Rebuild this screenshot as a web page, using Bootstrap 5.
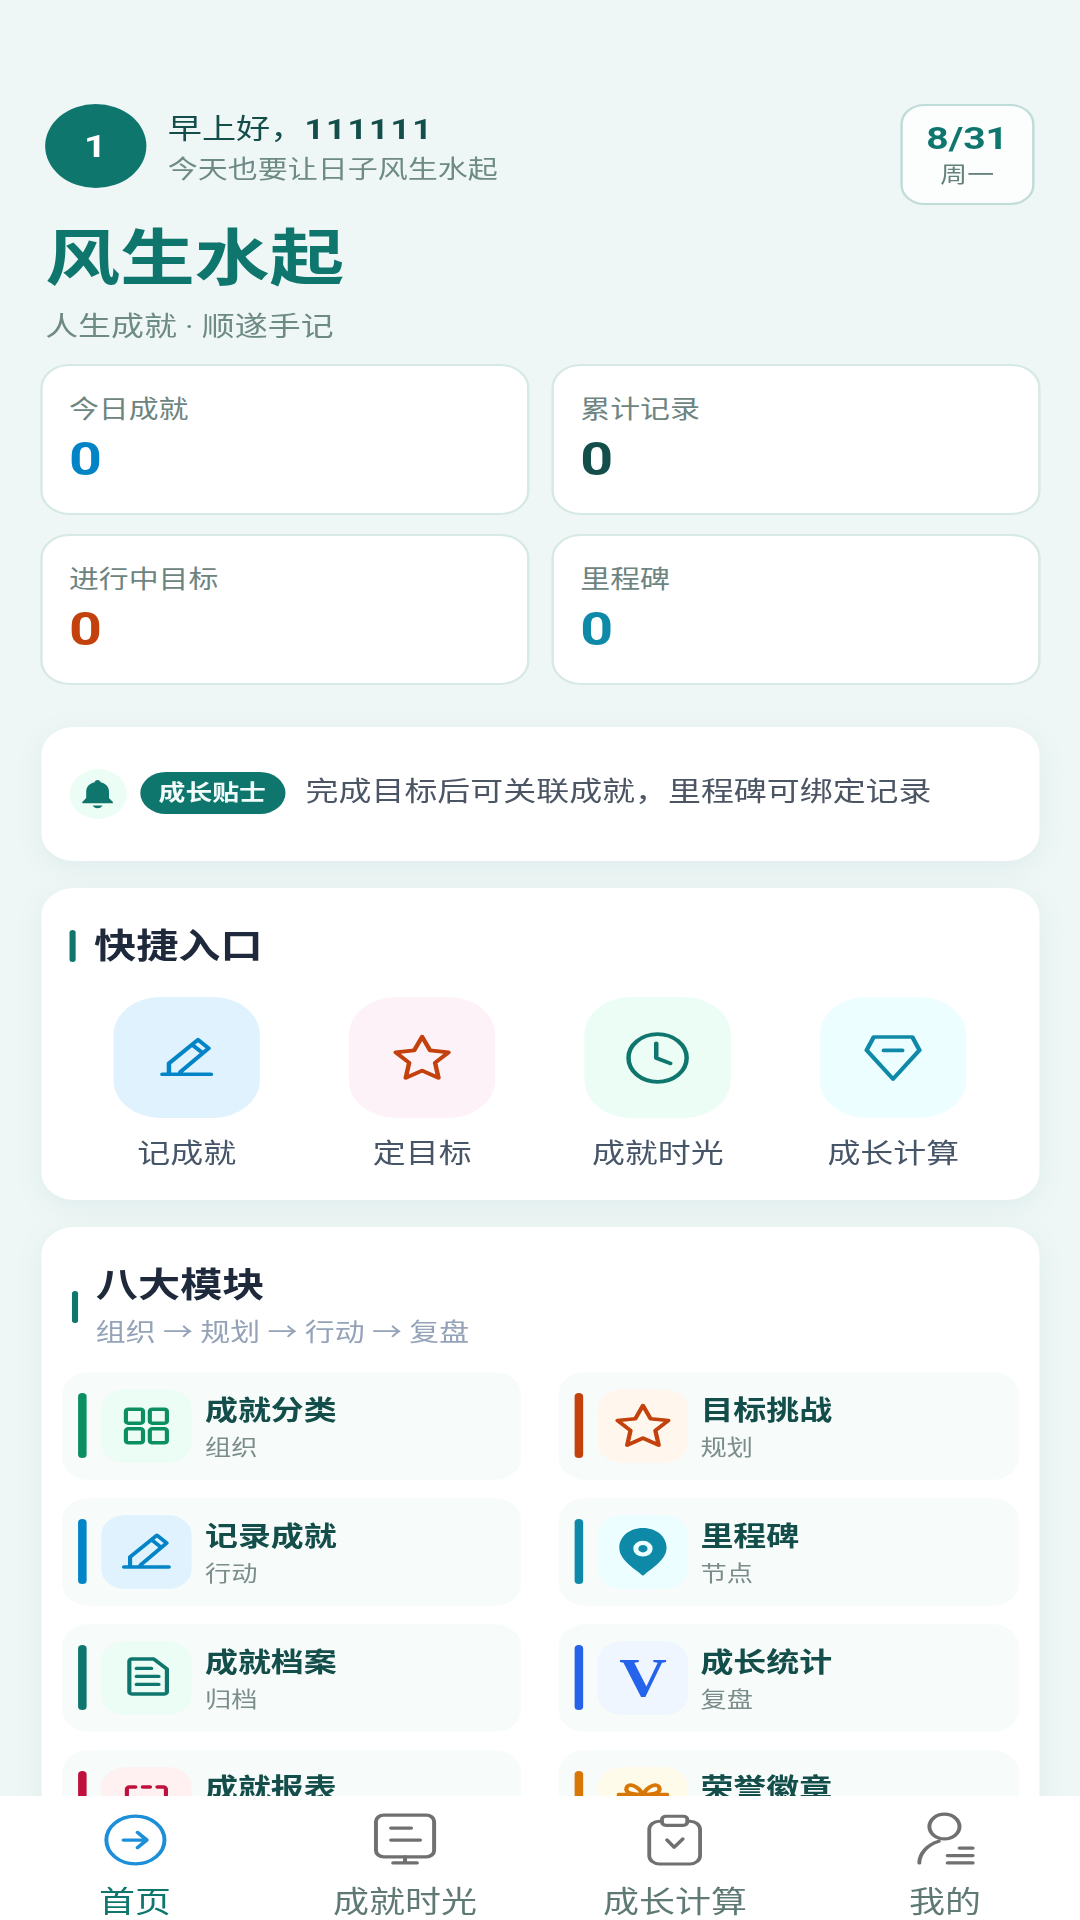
<!DOCTYPE html>
<html lang="zh-CN">
  <head>
    <meta charset="UTF-8" />
    <meta name="viewport" content="width=device-width, initial-scale=1.0" />
    <title>风生水起</title>
    <link
      href="https://cdn.jsdelivr.net/npm/bootstrap@5.3.0/dist/css/bootstrap.min.css"
      rel="stylesheet"
    />
    <style>
      html,
      body {
        margin: 0;
        height: 1920px;
        overflow: hidden;
        background: #eff7f6;
      }
      body {
        font-family: Roboto, "Noto Sans CJK SC", sans-serif;
      }
      /* the screenshot is stretched wider than tall, so the page is too */
      .phone {
        width: 885.25px;
        height: 1920px;
        transform: scaleX(1.22);
        transform-origin: 0 0;
      }
      .scroller {
        flex: 1 1 auto;
        min-height: 0;
        overflow: hidden;
        padding: 104px 33.5px 0;
      }
      .avatar {
        width: 83px;
        height: 84px;
        margin-left: 3px;
        background: #0f766e;
        color: #fff;
        font-size: 32px;
        font-weight: 700;
      }
      .greet {
        margin-left: 18px;
      }
      .hello {
        font-size: 28px;
        line-height: 36px;
        color: #134e4a;
        margin-top: 8px;
      }
      .hello b {
        font-weight: 700;
        letter-spacing: 1.6px;
      }
      .hello-sub {
        font-size: 24.6px;
        line-height: 34px;
        color: #6d8a85;
        margin-top: 5px;
      }
      .date-box {
        width: 110px;
        height: 101px;
        background: #fcfefe;
        border: 2.5px solid #c0dcd7;
        border-radius: 20px;
        margin-right: 4px;
      }
      .date-num {
        font-size: 32px;
        line-height: 36px;
        font-weight: 700;
        color: #0f766e;
      }
      .date-day {
        font-size: 22px;
        line-height: 30px;
        color: #64807a;
        margin-top: 4px;
      }
      .app-title {
        font-size: 61.3px;
        line-height: 68px;
        font-weight: 700;
        color: #0f766e;
        margin: 20px 0 0 3.5px;
      }
      .app-sub {
        font-size: 27px;
        line-height: 36px;
        color: #6d8a85;
        margin: 16px 0 0 3.5px;
      }
      .stat-grid {
        --bs-gutter-x: 18px;
        --bs-gutter-y: 19px;
        margin: 0 -10px;
      }
      .stat-card {
        height: 151px;
        border: 2.5px solid #d6e9e5;
        border-radius: 24px;
      }
      .stat-card .card-body {
        padding: 27px 22px 0;
      }
      .stat-label {
        font-size: 24.5px;
        line-height: 34px;
        color: #6d8480;
      }
      .stat-value {
        font-size: 47px;
        line-height: 54px;
        font-weight: 700;
        margin-top: 5px;
      }
      .panel {
        border: 0;
        border-radius: 27px;
        box-shadow: 0 6px 26px rgba(15, 118, 110, 0.08);
      }
      .tip-panel {
        height: 134px;
        margin-top: 42px;
        padding-left: 23px;
      }
      .tip-bell {
        width: 47px;
        height: 50px;
        background: #ecfdf5;
        margin-right: 11px;
      }
      .tip-pill {
        height: 42px;
        width: 119px;
        background: #0f766e;
        color: #f2fbf9;
        font-size: 22px;
        font-weight: 700;
        border-radius: 21px;
        margin: 0 17px 3px 0;
      }
      .tip-text {
        font-size: 27px;
        color: #4b5563;
        margin-bottom: 3px;
      }
      .quick-panel {
        height: 312px;
        margin-top: 27px;
        padding: 36px 23px 0;
      }
      .sec-bar {
        width: 5px;
        height: 32px;
        background: #0f766e;
        border-radius: 3px;
        margin-right: 15.5px;
      }
      .sec-title {
        font-size: 34.6px;
        line-height: 44px;
        font-weight: 700;
        color: #1e293b;
      }
      .quick-tile {
        width: 120.5px;
        height: 121px;
        border-radius: 38px;
      }
      .quick-label {
        font-size: 27px;
        line-height: 36px;
        color: #475569;
        margin-top: 18px;
      }
      .quick-row {
        margin-top: 29px;
      }
      .module-panel {
        margin-top: 27px;
        padding: 36px 17px 40px;
      }
      .module-head .sec-bar {
        height: 32px;
        margin-left: 8px;
        margin-right: 15px;
      }
      .module-sub {
        font-size: 24.5px;
        line-height: 34px;
        color: #94a3b8;
        margin-top: 9px;
      }
      .module-grid {
        --bs-gutter-x: 31px;
        --bs-gutter-y: 18.5px;
        margin-top: 3.5px;
      }
      .module-item {
        height: 107.5px;
        background: #f7fbfa;
        border-radius: 22px;
        padding-left: 13px;
      }
      .module-bar {
        width: 7px;
        height: 65px;
        border-radius: 4px;
        margin-right: 12px;
      }
      .module-tile {
        width: 74px;
        height: 74px;
        border-radius: 20px;
        margin-right: 11.5px;
      }
      .module-grid .col:nth-child(even) .module-tile {
        margin-right: 10px;
      }
      .module-v {
        font-family: "Liberation Serif", serif;
        font-size: 54px;
        font-weight: 700;
        line-height: 1;
        color: #2563eb;
      }
      .module-copy {
        padding-top: 5px;
      }
      .module-name {
        font-size: 27px;
        line-height: 36px;
        font-weight: 700;
        color: #134e4a;
      }
      .module-note {
        font-size: 21.5px;
        line-height: 30px;
        color: #7b8d8a;
        margin-top: 4px;
      }
      .tabbar {
        flex: 0 0 124px;
        background: #fff;
        padding-top: 18px;
      }
      .tab-label {
        font-size: 29.5px;
        line-height: 34px;
        color: #5f7a75;
        margin-top: 19px;
      }
      .tab-on {
        color: #0f766e;
      }
      svg {
        display: block;
        overflow: visible;
      }
      .ic {
        fill: none;
        stroke: currentColor;
        stroke-width: 1.7;
        stroke-linecap: round;
        stroke-linejoin: round;
      }
      .ic-nav {
        color: #707070;
        stroke-width: 1.5;
      }
    </style>
  </head>
  <body>
    <div class="phone d-flex flex-column">
      <div class="scroller">
        <div class="d-flex justify-content-between align-items-start">
          <div class="d-flex">
            <div class="avatar rounded-circle d-flex align-items-center justify-content-center">1</div>
            <div class="greet">
              <div class="hello">早上好，<b>111111</b></div>
              <div class="hello-sub">今天也要让日子风生水起</div>
            </div>
          </div>
          <div class="date-box d-flex flex-column align-items-center justify-content-center">
            <div class="date-num">8/31</div>
            <div class="date-day">周一</div>
          </div>
        </div>
        <div class="app-title">风生水起</div>
        <div class="app-sub">人生成就 · 顺遂手记</div>

        <div class="row row-cols-2 stat-grid">
          <div class="col">
            <div class="card stat-card">
              <div class="card-body">
                <div class="stat-label">今日成就</div>
                <div class="stat-value" style="color: #0284c7">0</div>
              </div>
            </div>
          </div>
          <div class="col">
            <div class="card stat-card">
              <div class="card-body">
                <div class="stat-label">累计记录</div>
                <div class="stat-value" style="color: #134e4a">0</div>
              </div>
            </div>
          </div>
          <div class="col">
            <div class="card stat-card">
              <div class="card-body">
                <div class="stat-label">进行中目标</div>
                <div class="stat-value" style="color: #c2410c">0</div>
              </div>
            </div>
          </div>
          <div class="col">
            <div class="card stat-card">
              <div class="card-body">
                <div class="stat-label">里程碑</div>
                <div class="stat-value" style="color: #0e8aa8">0</div>
              </div>
            </div>
          </div>
        </div>

        <div class="card panel tip-panel flex-row align-items-center">
          <div class="tip-bell rounded-circle d-flex align-items-center justify-content-center">
            <svg width="32" height="34" viewBox="0 0 24 24" fill="#0f766e">
              <path d="M12 1.500c1 0 1.700.7 1.800 1.700 3.200.8 5.200 3.500 5.200 6.800v5l2.400 3v1H2.600v-1l2.400-3v-5c0-3.300 2-6 5.200-6.800.1-1 .8-1.700 1.800-1.700z" />
              <path d="M9 20.600h6c-.4 1.200-1.600 2-3 2s-2.600-.8-3-2z" />
            </svg>
          </div>
          <div class="tip-pill d-flex align-items-center justify-content-center">成长贴士</div>
          <div class="tip-text">完成目标后可关联成就，里程碑可绑定记录</div>
        </div>

        <div class="card panel quick-panel">
          <div class="d-flex align-items-center">
            <div class="sec-bar"></div>
            <div class="sec-title">快捷入口</div>
          </div>
          <div class="row row-cols-4 g-0 quick-row text-center">
            <div class="col d-flex flex-column align-items-center">
              <div class="quick-tile d-flex align-items-center justify-content-center" style="background: #e0f2fe">
                <svg class="ic" width="52" height="52" viewBox="0 0 24 24" style="color: #0284c7">
                  <path d="M2.800 19.500H21.200M5.300 19.300V14.500L16.300 3.600 20.300 7.500 9.600 18.500M14 5.800l4.100 3.900" />
                </svg>
              </div>
              <div class="quick-label">记成就</div>
            </div>
            <div class="col d-flex flex-column align-items-center">
              <div class="quick-tile d-flex align-items-center justify-content-center" style="background: #fdf2f8">
                <svg class="ic" width="52" height="52" viewBox="0 0 24 24" style="color: #c2410c">
                  <path d="M12 2.200 15 8.500 22 9.400 16.900 14.200 18.200 21.200 12 17.800 5.800 21.200 7.100 14.200 2 9.400 9 8.500Z" />
                </svg>
              </div>
              <div class="quick-label">定目标</div>
            </div>
            <div class="col d-flex flex-column align-items-center">
              <div class="quick-tile d-flex align-items-center justify-content-center" style="background: #ecfdf5">
                <svg class="ic" width="52" height="52" viewBox="0 0 24 24" style="color: #0f766e">
                  <circle cx="12" cy="12" r="11" />
                  <path d="M11.500 5.200V12L16.800 14.500" />
                </svg>
              </div>
              <div class="quick-label">成就时光</div>
            </div>
            <div class="col d-flex flex-column align-items-center">
              <div class="quick-tile d-flex align-items-center justify-content-center" style="background: #ecfeff">
                <svg class="ic" width="52" height="52" viewBox="0 0 24 24" style="color: #0e8aa8">
                  <path d="M4.700 2.300H19.300L22 8.400 12 21.700 2 8.400ZM8.500 8.500H15.500" />
                </svg>
              </div>
              <div class="quick-label">成长计算</div>
            </div>
          </div>
        </div>

        <div class="card panel module-panel">
          <div class="d-flex align-items-center module-head">
            <div class="sec-bar"></div>
            <div>
              <div class="sec-title">八大模块</div>
              <div class="module-sub">组织 → 规划 → 行动 → 复盘</div>
            </div>
          </div>
          <div class="row row-cols-2 module-grid">
            <div class="col">
              <div class="module-item d-flex align-items-center">
                <div class="module-bar" style="background: #0b8f62"></div>
                <div class="module-tile d-flex align-items-center justify-content-center" style="background: #ecfdf5">
                  <svg class="ic" width="48" height="50" viewBox="0 0 24 24" style="color: #0b8f62">
                    <rect x="3.600" y="3.600" width="7" height="7" rx="1" />
                    <rect x="13.400" y="3.600" width="7" height="7" rx="1" />
                    <rect x="3.600" y="13.400" width="7" height="7" rx="1" />
                    <rect x="13.400" y="13.400" width="7" height="7" rx="1" />
                  </svg>
                </div>
                <div class="module-copy">
                  <div class="module-name">成就分类</div>
                  <div class="module-note">组织</div>
                </div>
              </div>
            </div>
            <div class="col">
              <div class="module-item d-flex align-items-center">
                <div class="module-bar" style="background: #c2410c"></div>
                <div class="module-tile d-flex align-items-center justify-content-center" style="background: #fff7ed">
                  <svg class="ic" width="50" height="50" viewBox="0 0 24 24" style="color: #c2410c">
                    <path d="M12 2.200 15 8.500 22 9.400 16.900 14.200 18.200 21.200 12 17.800 5.800 21.200 7.100 14.200 2 9.400 9 8.500Z" />
                  </svg>
                </div>
                <div class="module-copy">
                  <div class="module-name">目标挑战</div>
                  <div class="module-note">规划</div>
                </div>
              </div>
            </div>
            <div class="col">
              <div class="module-item d-flex align-items-center">
                <div class="module-bar" style="background: #0284c7"></div>
                <div class="module-tile d-flex align-items-center justify-content-center" style="background: #e0f2fe">
                  <svg class="ic" width="48" height="50" viewBox="0 0 24 24" style="color: #0284c7">
                    <path d="M2.800 19.500H21.200M5.300 19.300V14.500L16.300 3.600 20.300 7.500 9.600 18.500M14 5.800l4.100 3.900" />
                  </svg>
                </div>
                <div class="module-copy">
                  <div class="module-name">记录成就</div>
                  <div class="module-note">行动</div>
                </div>
              </div>
            </div>
            <div class="col">
              <div class="module-item d-flex align-items-center">
                <div class="module-bar" style="background: #0e8aa8"></div>
                <div class="module-tile d-flex align-items-center justify-content-center" style="background: #ecfeff">
                  <svg width="50" height="50" viewBox="0 0 24 24">
                    <path fill="#0e8aa8" d="M12 .5C6.500 .5 2.700 4.800 2.700 10 2.700 15.500 8 19.500 12 23.400 16 19.500 21.300 15.500 21.300 10 21.300 4.800 17.500 .5 12 .5Z" />
                    <circle cx="12" cy="10.400" r="3.800" fill="#ecfeff" />
                    <circle cx="12" cy="10.400" r="1.800" fill="#0e8aa8" />
                  </svg>
                </div>
                <div class="module-copy">
                  <div class="module-name">里程碑</div>
                  <div class="module-note">节点</div>
                </div>
              </div>
            </div>
            <div class="col">
              <div class="module-item d-flex align-items-center">
                <div class="module-bar" style="background: #0f766e"></div>
                <div class="module-tile d-flex align-items-center justify-content-center" style="background: #ecfdf5">
                  <svg class="ic" width="48" height="50" viewBox="0 0 24 24" style="color: #0f766e">
                    <path d="M6 2.500H15L20.400 7.500V19A1 1 0 0 1 19.400 20H6A1 1 0 0 1 5 19V3.500A1 1 0 0 1 6 2.500ZM8 7.200H14M8 11.200H17M8 15.200H17" />
                  </svg>
                </div>
                <div class="module-copy">
                  <div class="module-name">成就档案</div>
                  <div class="module-note">归档</div>
                </div>
              </div>
            </div>
            <div class="col">
              <div class="module-item d-flex align-items-center">
                <div class="module-bar" style="background: #2563eb"></div>
                <div class="module-tile d-flex align-items-center justify-content-center" style="background: #eff6ff">
                  <span class="module-v">V</span>
                </div>
                <div class="module-copy">
                  <div class="module-name">成长统计</div>
                  <div class="module-note">复盘</div>
                </div>
              </div>
            </div>
            <div class="col">
              <div class="module-item d-flex align-items-center">
                <div class="module-bar" style="background: #be123c"></div>
                <div class="module-tile d-flex align-items-center justify-content-center" style="background: #fff1f2">
                  <svg class="ic" width="48" height="50" viewBox="0 0 24 24" style="color: #be123c">
                    <path d="M4 7.500V4.500A1 1 0 0 1 5 3.500H7.500M10.500 3.500H13.500M16.500 3.500H19A1 1 0 0 1 20 4.500V7.500M4 11V19A1 1 0 0 0 5 20H19A1 1 0 0 0 20 19V11" />
                  </svg>
                </div>
                <div class="module-copy">
                  <div class="module-name">成就报表</div>
                  <div class="module-note">明细</div>
                </div>
              </div>
            </div>
            <div class="col">
              <div class="module-item d-flex align-items-center">
                <div class="module-bar" style="background: #d97706"></div>
                <div class="module-tile d-flex align-items-center justify-content-center" style="background: #fffbeb">
                  <svg class="ic" width="50" height="50" viewBox="0 0 24 24" style="color: #d97706">
                    <path d="M2.500 7.500H21.500M12 7.500C10 3 6 1.500 5.500 4.500 5 7 9 7.500 12 7.500 15 7.500 19 7 18.500 4.500 18 1.500 14 3 12 7.500ZM4 7.500V20H20V7.500M12 7.500V20" />
                  </svg>
                </div>
                <div class="module-copy">
                  <div class="module-name">荣誉徽章</div>
                  <div class="module-note">激励</div>
                </div>
              </div>
            </div>
          </div>
        </div>
      </div>

      <div class="tabbar row row-cols-4 g-0 text-center">
        <div class="col d-flex flex-column align-items-center">
          <svg class="ic ic-nav" width="52" height="52" viewBox="0 0 24 24" style="color: #1d8fd8">
            <circle cx="12" cy="12" r="11" />
            <path d="M7.500 12H16M12.800 8.500 16.300 12 12.800 15.500" />
          </svg>
          <div class="tab-label tab-on">首页</div>
        </div>
        <div class="col d-flex flex-column align-items-center">
          <svg class="ic ic-nav" width="52" height="52" viewBox="0 0 24 24">
            <rect x="1" y=".5" width="22" height="19.300" rx="3" />
            <path d="M6.700 6.500H14.300M6.700 12H17.700M12 19.800V22.600M7.500 22.600H16.500" />
          </svg>
          <div class="tab-label">成就时光</div>
        </div>
        <div class="col d-flex flex-column align-items-center">
          <svg class="ic ic-nav" width="50" height="52" viewBox="0 0 24 24">
            <path d="M7 3H6A4 4 0 0 0 2 7V19.500A4 4 0 0 0 6 23.500H18A4 4 0 0 0 22 19.500V7A4 4 0 0 0 18 3H17" />
            <rect x="7" y=".6" width="10" height="4.400" rx="1.600" />
            <path d="M9 12 11.800 15.500 15.200 11.500" />
          </svg>
          <div class="tab-label">成长计算</div>
        </div>
        <div class="col d-flex flex-column align-items-center">
          <svg class="ic ic-nav" width="52" height="52" viewBox="0 0 24 24">
            <circle cx="11.600" cy="5.800" r="5.700" />
            <path d="M2.100 22.600C2.100 18 5.500 14 9.500 12.600M17.300 15.700H22.300M12.800 19.200H22.300M12.800 22.600H22.300" />
          </svg>
          <div class="tab-label">我的</div>
        </div>
      </div>
    </div>
    <script src="https://cdn.jsdelivr.net/npm/bootstrap@5.3.0/dist/js/bootstrap.bundle.min.js"></script>
  </body>
</html>
